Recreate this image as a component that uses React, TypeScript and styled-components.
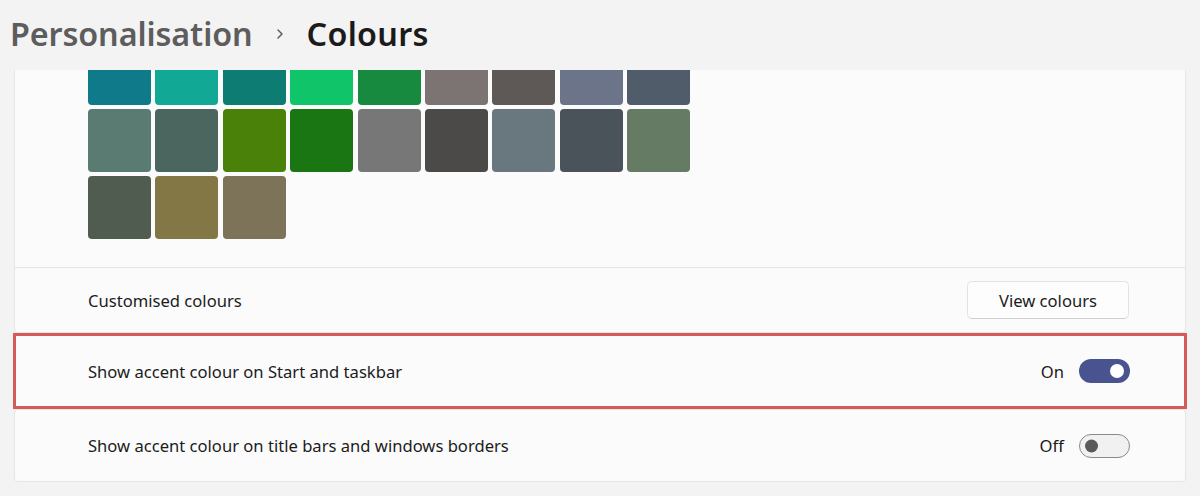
import { useState } from "react";
import styled, { createGlobalStyle } from "styled-components";

const GlobalStyle = createGlobalStyle`
  html, body {
    margin: 0;
    padding: 0;
    background: #f3f3f3;
  }
  body {
    font-family: "Noto Sans", "Open Sans", sans-serif;
    color: #1b1b1b;
  }
`;

const swatchRows = [
  ["#0f7b8a", "#12a896", "#0d7d74", "#10c46a", "#178a40", "#7b7473", "#5e5957", "#6b7489", "#515c6b"],
  ["#5a7b72", "#4b665f", "#4a8108", "#1a7612", "#777777", "#4b4a48", "#69777e", "#4a5359", "#667b63"],
  ["#515c51", "#837845", "#7c7358"],
];

const Page = styled.div`
  width: 1200px;
  height: 496px;
  display: flex;
  flex-direction: column;
  overflow: hidden;
`;

const Breadcrumb = styled.div`
  height: 70px;
  flex-shrink: 0;
  display: flex;
  align-items: center;
  gap: 21px;
  padding: 0 0 5px 10px;
  box-sizing: border-box;
  font-size: 32.3px;
  font-weight: 600;
  letter-spacing: -0.1px;
`;

const Crumb = styled.span<{ $current?: boolean }>`
  color: ${(p) => (p.$current ? "#1b1b1b" : "#5d5d5d")};
  letter-spacing: ${(p) => (p.$current ? "0.3px" : "-0.1px")};
`;

const Chevron = styled.svg`
  width: 12px;
  height: 12px;
  margin-top: 2px;
`;

const Scroller = styled.div`
  flex: 1;
  overflow: hidden;
  padding: 0 14px;
  display: flex;
  flex-direction: column;
  gap: 1px;
`;

const Card = styled.div<{ $clipped?: boolean }>`
  background: #fbfbfb;
  border: 1px solid #e5e5e5;
  border-radius: ${(p) => (p.$clipped ? "0 0 4px 4px" : "4px")};
  margin-top: ${(p) => (p.$clipped ? "-29px" : "0")};
`;

const SwatchArea = styled.div`
  padding: 0 0 28px 73px;
  display: flex;
  flex-direction: column;
  gap: 4px;
  border-bottom: 1px solid #e5e5e5;
`;

const SwatchRow = styled.div`
  display: flex;
  gap: 4.4px;
`;

const Swatch = styled.div<{ $color: string }>`
  width: 63px;
  height: 63px;
  border-radius: 4px;
  background: ${(p) => p.$color};
`;

const Row = styled.div<{ $highlight?: boolean; $height: number }>`
  height: ${(p) => p.$height}px;
  display: flex;
  align-items: center;
  justify-content: space-between;
  padding: 0 55px 0 73px;
  box-sizing: border-box;
  font-size: 16.6px;
  ${(p) =>
    p.$highlight &&
    `
    outline: 3px solid #d45a5c;
    outline-offset: -1px;
    box-shadow: 0 1px 3px rgba(120, 40, 40, 0.25);
  `}
`;

const Label = styled.span`
  color: #1b1b1b;
`;

const Control = styled.div`
  display: flex;
  align-items: center;
  gap: 15px;
  font-size: 16.6px;
`;

const Button = styled.button`
  width: 162px;
  height: 38px;
  background: #fdfdfd;
  border: 1px solid #e2e2e2;
  border-bottom-color: #d0d0d0;
  border-radius: 5px;
  font-family: inherit;
  font-size: 16.6px;
  color: #1b1b1b;
  margin-right: 1px;
`;

const Track = styled.button<{ $on: boolean }>`
  position: relative;
  width: 51px;
  height: 24px;
  border-radius: 12px;
  padding: 0;
  box-sizing: border-box;
  border: ${(p) => (p.$on ? "none" : "1px solid #8a8a8a")};
  background: ${(p) => (p.$on ? "#48538f" : "#f1f1f1")};
  cursor: pointer;
`;

const Knob = styled.span<{ $on: boolean }>`
  position: absolute;
  top: 50%;
  transform: translateY(-50%);
  left: ${(p) => (p.$on ? "31px" : "5px")};
  width: ${(p) => (p.$on ? "14px" : "13px")};
  height: ${(p) => (p.$on ? "14px" : "13px")};
  border-radius: 50%;
  background: ${(p) => (p.$on ? "#ffffff" : "#5a5a5a")};
`;

const Toggle = ({ on, onChange }: { on: boolean; onChange: () => void }) => (
  <Control>
    <span>{on ? "On" : "Off"}</span>
    <Track $on={on} onClick={onChange}>
      <Knob $on={on} />
    </Track>
  </Control>
);

export default function App() {
  const [taskbar, setTaskbar] = useState(true);
  const [titleBars, setTitleBars] = useState(false);

  return (
    <Page>
      <GlobalStyle />
      <Breadcrumb>
        <Crumb>Personalisation</Crumb>
        <Chevron viewBox="0 0 12 12">
          <path d="M4 2l4 4-4 4" fill="none" stroke="#5d5d5d" strokeWidth="1.5" strokeLinecap="round" strokeLinejoin="round" />
        </Chevron>
        <Crumb $current>Colours</Crumb>
      </Breadcrumb>
      <Scroller>
        <Card $clipped>
          <SwatchArea>
            {swatchRows.map((row, i) => (
              <SwatchRow key={i}>
                {row.map((c) => (
                  <Swatch key={c} $color={c} />
                ))}
              </SwatchRow>
            ))}
          </SwatchArea>
          <Row $height={64}>
            <Label>Customised colours</Label>
            <Button>View colours</Button>
          </Row>
        </Card>
        <Card>
          <Row $height={72} $highlight>
            <Label>Show accent colour on Start and taskbar</Label>
            <Toggle on={taskbar} onChange={() => setTaskbar(!taskbar)} />
          </Row>
        </Card>
        <Card>
          <Row $height={71}>
            <Label>Show accent colour on title bars and windows borders</Label>
            <Toggle on={titleBars} onChange={() => setTitleBars(!titleBars)} />
          </Row>
        </Card>
      </Scroller>
    </Page>
  );
}
